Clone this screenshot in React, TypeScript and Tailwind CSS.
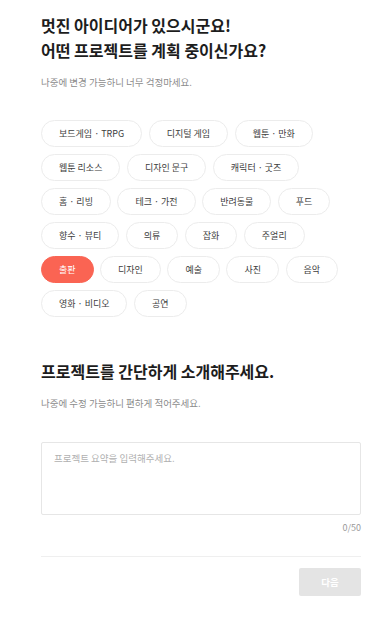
import { useState } from "react";

const categories = [
  "보드게임 · TRPG",
  "디지털 게임",
  "웹툰 · 만화",
  "웹툰 리소스",
  "디자인 문구",
  "캐릭터 · 굿즈",
  "홈 · 리빙",
  "테크 · 가전",
  "반려동물",
  "푸드",
  "향수 · 뷰티",
  "의류",
  "잡화",
  "주얼리",
  "출판",
  "디자인",
  "예술",
  "사진",
  "음악",
  "영화 · 비디오",
  "공연",
];

const App = () => {
  const [selected, setSelected] = useState("출판");
  const [summary, setSummary] = useState("");

  return (
    <div
      className="min-h-[628px] bg-white pl-[41px] pr-[25px] pt-[13px] text-[#1d1d1d]"
      style={{ fontFamily: '"Noto Sans CJK KR", "Noto Sans", sans-serif' }}
    >
      <h1 className="text-[16px] font-bold leading-[25px]">
        멋진 아이디어가 있으시군요!
        <br />
        어떤 프로젝트를 계획 중이신가요?
      </h1>
      <p className="mt-[12px] text-[9.5px] leading-[14px] text-[#8c8c8c]">
        나중에 변경 가능하니 너무 걱정마세요.
      </p>

      <div className="mt-[31px] flex flex-wrap gap-x-[6.5px] gap-y-[7px]">
        {categories.map((c) => {
          const active = c === selected;
          return (
            <button
              key={c}
              onClick={() => setSelected(c)}
              className={
                active
                  ? "flex h-[27px] items-center rounded-full border border-[#fa6453] bg-[#fa6453] px-[17px] text-[9px] text-white"
                  : "flex h-[27px] items-center rounded-full border border-[#ececec] bg-white px-[17px] text-[9px] text-[#3d3d3d]"
              }
            >
              {c}
            </button>
          );
        })}
      </div>

      <h2 className="mt-[42px] text-[16px] font-bold leading-[25px]">
        프로젝트를 간단하게 소개해주세요.
      </h2>
      <p className="mt-[12px] text-[9.5px] leading-[14px] text-[#8c8c8c]">
        나중에 수정 가능하니 편하게 적어주세요.
      </p>

      <textarea
        value={summary}
        onChange={(e) => setSummary(e.target.value.slice(0, 50))}
        placeholder="프로젝트 요약을 입력해주세요."
        className="mt-[32px] block h-[73px] w-full resize-none rounded-[2px] border border-[#e6e6e6] px-[12px] py-[8px] text-[9.5px] leading-[14px] outline-none placeholder:text-[#b0b0b0]"
      />
      <div className="mt-[6px] text-right text-[9px] leading-[14px] text-[#9a9a9a]">
        {summary.length}/50
      </div>

      <div className="mt-[21px] h-px bg-[#efefef]" />

      <div className="mt-[11px] flex justify-end">
        <button className="h-[28px] w-[62px] rounded-[2px] bg-[#e4e4e4] text-[9.5px] font-bold text-white">
          다음
        </button>
      </div>
    </div>
  );
};

export default App;
